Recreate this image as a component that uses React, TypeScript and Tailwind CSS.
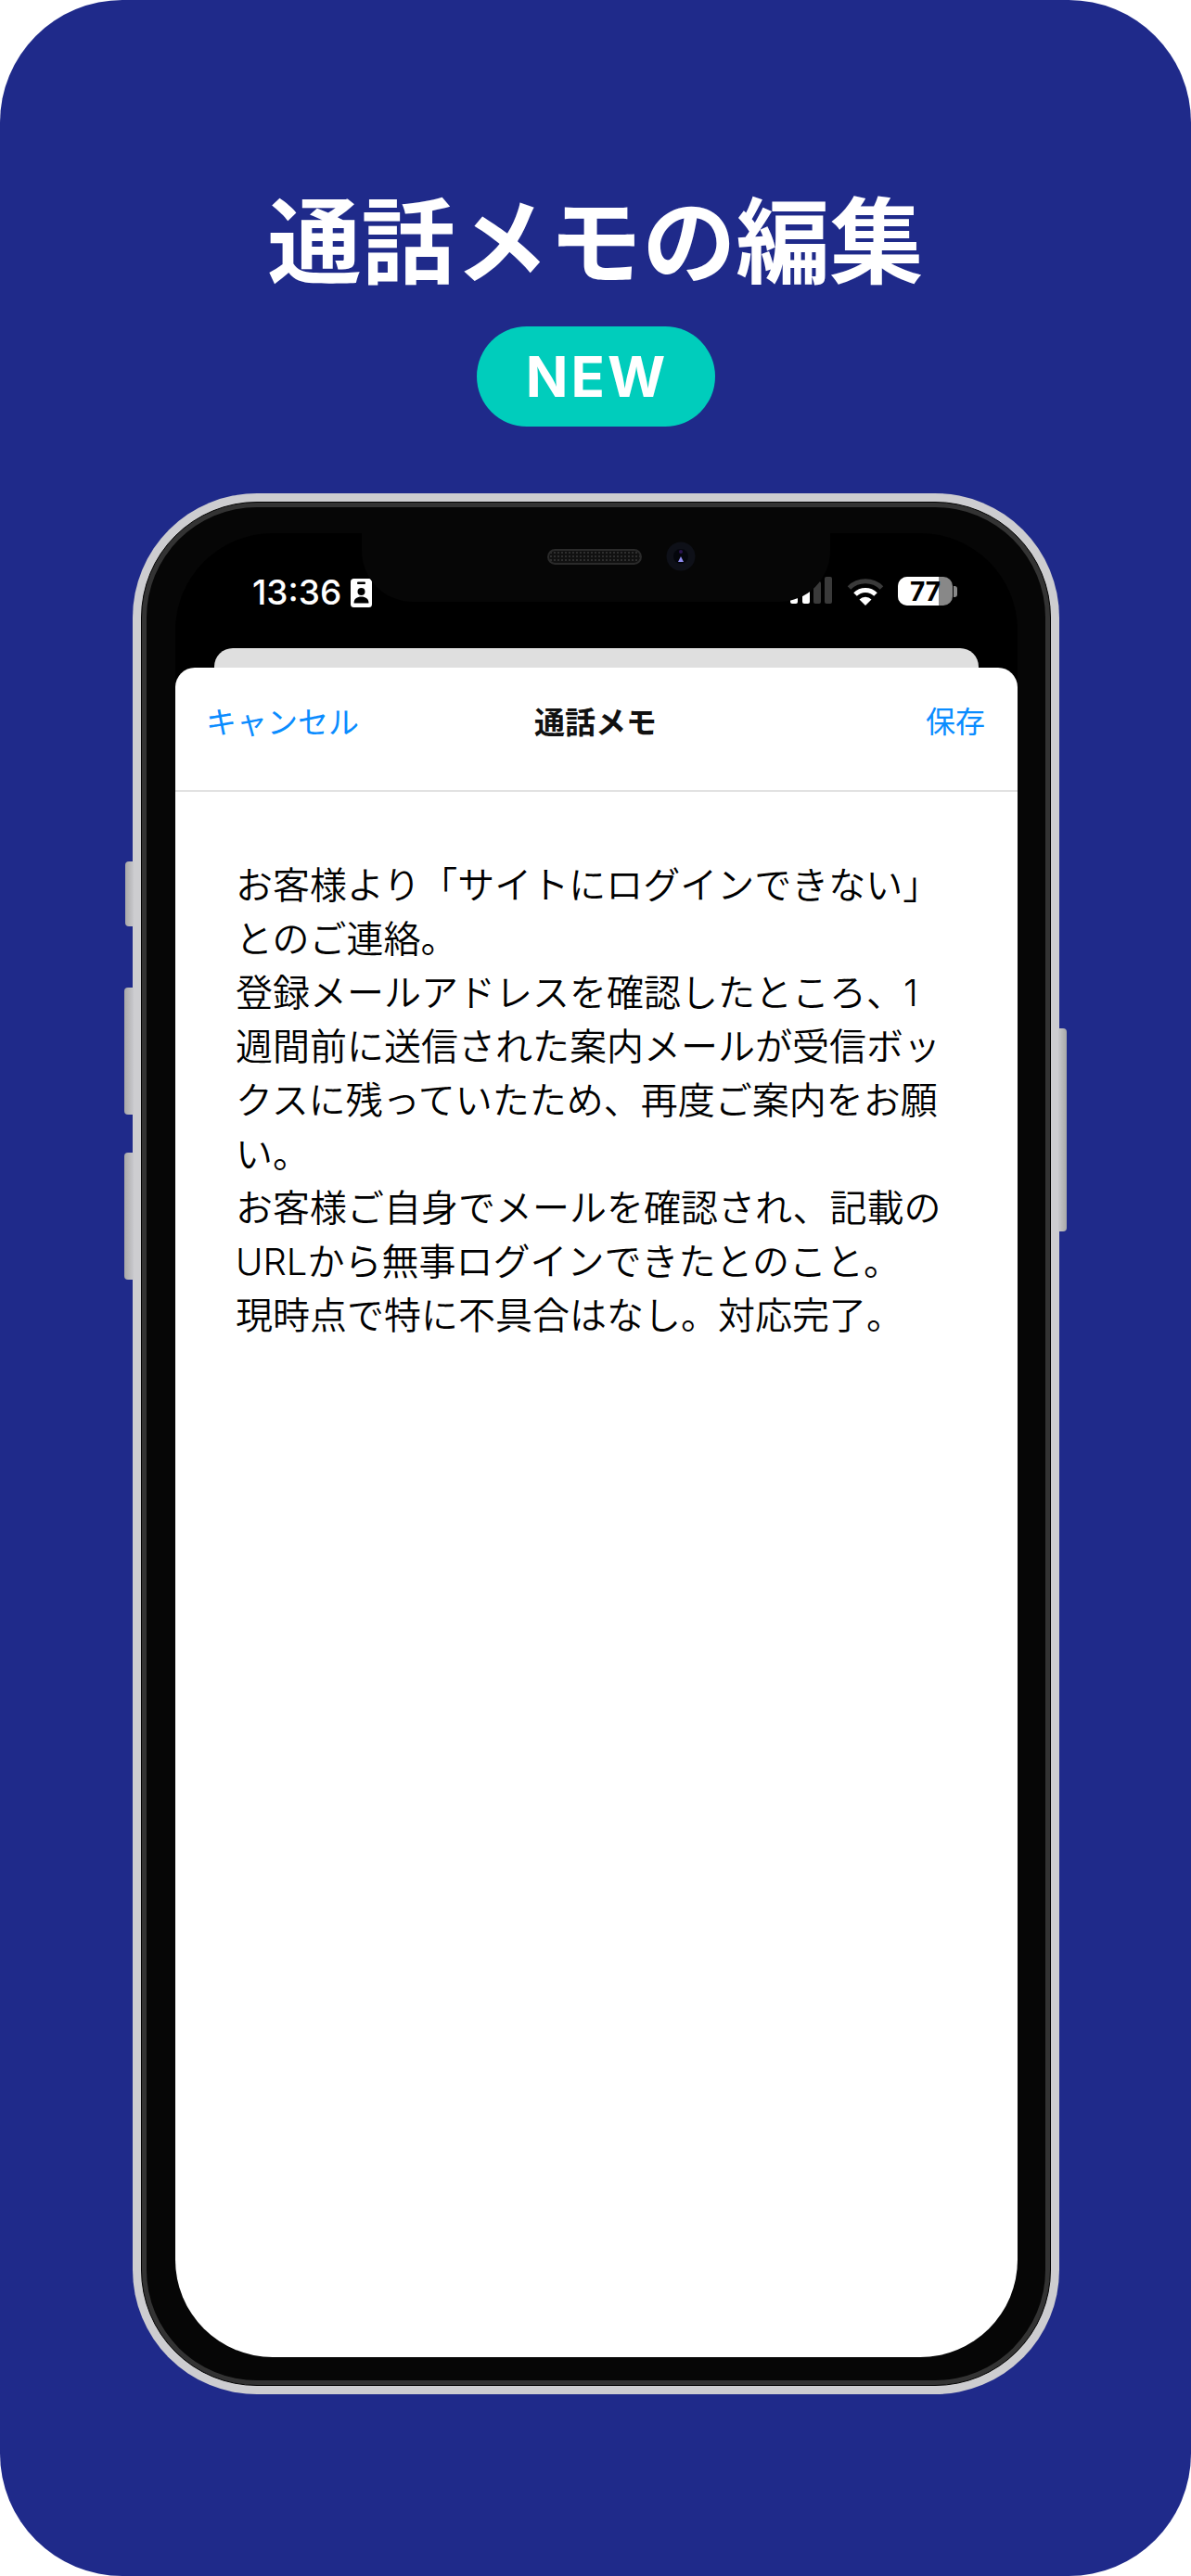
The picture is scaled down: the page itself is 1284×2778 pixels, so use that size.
const memoLines = [
  "お客様より「サイトにログインできない」",
  "とのご連絡。",
  "登録メールアドレスを確認したところ、1",
  "週間前に送信された案内メールが受信ボッ",
  "クスに残っていたため、再度ご案内をお願",
  "い。",
  "お客様ご自身でメールを確認され、記載の",
  "URLから無事ログインできたとのこと。",
  "現時点で特に不具合はなし。対応完了。",
];

const fontStack = "font-['Inter','Noto_Sans_CJK_JP',sans-serif]";

function ContactIcon() {
  return (
    <svg width="23" height="31" viewBox="0 0 23 31">
      <rect width="23" height="31" rx="3.5" fill="#fff" />
      <rect x="7" y="3.5" width="9" height="2.5" rx="1" fill="#000" />
      <circle cx="11.5" cy="14" r="4" fill="#000" />
      <path d="M3.5 26.5c0-5 3.5-7 8-7s8 2 8 7z" fill="#000" />
    </svg>
  );
}

function SignalIcon() {
  return (
    <svg width="46" height="29" viewBox="0 0 46 29">
      <rect x="0" y="14" width="8" height="15" rx="2" fill="#fff" />
      <rect x="13" y="9" width="8" height="20" rx="2" fill="#fff" />
      <rect x="25" y="5" width="8" height="24" rx="2" fill="#3a3a3a" />
      <rect x="37" y="0" width="8" height="29" rx="2" fill="#3a3a3a" />
    </svg>
  );
}

function WifiIcon() {
  return (
    <svg width="40" height="30" viewBox="0 0 40 30">
      <path d="M2.5 11A25 25 0 0 1 37.5 11" fill="none" stroke="#3a3a3a" strokeWidth="5" />
      <path d="M9 18A15.5 15.5 0 0 1 31 18" fill="none" stroke="#fff" strokeWidth="5" />
      <path d="M13.5 23.5A9 9 0 0 1 26.5 23.5L20 30Z" fill="#fff" />
    </svg>
  );
}

function Battery() {
  return (
    <div className="flex items-center gap-[1px]">
      <div className="relative w-[59px] h-[31px] rounded-[10px] overflow-hidden bg-[#888888]">
        <div className="w-[44px] h-full bg-white" />
        <span className="absolute inset-0 flex items-center justify-center text-[28px] leading-none font-bold text-black">
          77
        </span>
      </div>
      <div className="w-[4px] h-[12px] rounded-r-[3px] bg-[#888888]" />
    </div>
  );
}

function Camera() {
  return (
    <svg width="32" height="32" viewBox="0 0 32 32">
      <circle cx="16" cy="16" r="15.5" fill="#0e1018" />
      <circle cx="16" cy="16" r="8" fill="#04060c" />
      <circle cx="16" cy="11" r="2" fill="#2a1450" />
      <path d="M13 22l3-6 3 6z" fill="#8f8cf0" />
    </svg>
  );
}

export default function App() {
  return (
    <div className={`w-[1284px] h-[2778px] bg-white ${fontStack}`}>
      <div className="h-full rounded-[132px] bg-[#1f2a8a] flex flex-col items-center">
        <h1 className="mt-[206px] text-[101px] leading-[110px] font-bold text-white whitespace-nowrap">
          通話メモの編集
        </h1>
        <div className="mt-[36px] w-[257px] h-[108px] rounded-full bg-[#00cdbc] flex items-center justify-center pl-[3px] text-[60px] leading-none font-bold tracking-[3px] text-white">
          NEW
        </div>

        <div className="relative mt-[72px] self-start ml-[143px] w-[999px] h-[2050px] rounded-[134px] bg-[#cdcdd0] p-[9px]">
          <div className="absolute left-[-8px] top-[397px] w-[9px] h-[70px] rounded-l-[4px] bg-gradient-to-r from-[#a8a8a8] to-[#c8c8cc]" />
          <div className="absolute left-[-9px] top-[533px] w-[10px] h-[137px] rounded-l-[4px] bg-gradient-to-r from-[#a8a8a8] to-[#c8c8cc]" />
          <div className="absolute left-[-9px] top-[711px] w-[10px] h-[137px] rounded-l-[4px] bg-gradient-to-r from-[#a8a8a8] to-[#c8c8cc]" />
          <div className="absolute right-[-8px] top-[577px] w-[9px] h-[219px] rounded-r-[4px] bg-gradient-to-l from-[#a8a8a8] to-[#c8c8cc]" />

          <div className="h-full rounded-[125px] bg-[#333333] border border-black p-[5px]">
            <div className="h-full rounded-[119px] bg-[#060606] pt-[28px] pb-[25px] pl-[31px] pr-[30px]">
              <div className="relative h-full rounded-[105px] bg-black overflow-hidden flex flex-col">
                <div className="absolute left-[201px] top-0 z-10 w-[505px] h-[74px] rounded-b-[55px] bg-[#060606] flex items-start justify-center pt-[9px] pl-[54px] gap-[26px]">
                  <div className="mt-[8px] w-[102px] h-[17px] rounded-full border-2 border-[#2a2a2a] bg-[#111111] bg-[radial-gradient(#2e2e2e_35%,transparent_40%)] bg-[length:4px_4px]" />
                  <Camera />
                </div>

                <div className="h-[124px] shrink-0 flex items-start justify-between pt-[47px] pl-[83px] pr-[65px]">
                  <div className="flex items-center gap-[10px]">
                    <span className="text-[37px] leading-[34px] font-medium text-white">13:36</span>
                    <ContactIcon />
                  </div>
                  <div className="flex items-end gap-[15px]">
                    <div className="mb-[2px]">
                      <SignalIcon />
                    </div>
                    <WifiIcon />
                    <Battery />
                  </div>
                </div>

                <div className="shrink-0 mx-[42px] h-[21px] rounded-t-[20px] bg-[#dfdfdf]" />

                <div className="flex-1 rounded-t-[21px] bg-white flex flex-col">
                  <div className="h-[134px] shrink-0 border-b-2 border-[#e2e2e2] grid grid-cols-3 items-start pl-[33px] pr-[35px] pt-[36px] text-[32px] leading-[46px]">
                    <span className="text-[33px] text-[#0a8cff]">キャンセル</span>
                    <span className="text-center text-[33px] font-bold text-[#111111]">通話メモ</span>
                    <span className="text-right text-[#0a8cff]">保存</span>
                  </div>
                  <div className="px-[65px] pt-[72px] text-[40px] leading-[58px] font-[350] text-black whitespace-nowrap">
                    {memoLines.map((line) => (
                      <div key={line}>{line}</div>
                    ))}
                  </div>
                </div>
              </div>
            </div>
          </div>
        </div>
      </div>
    </div>
  );
}
